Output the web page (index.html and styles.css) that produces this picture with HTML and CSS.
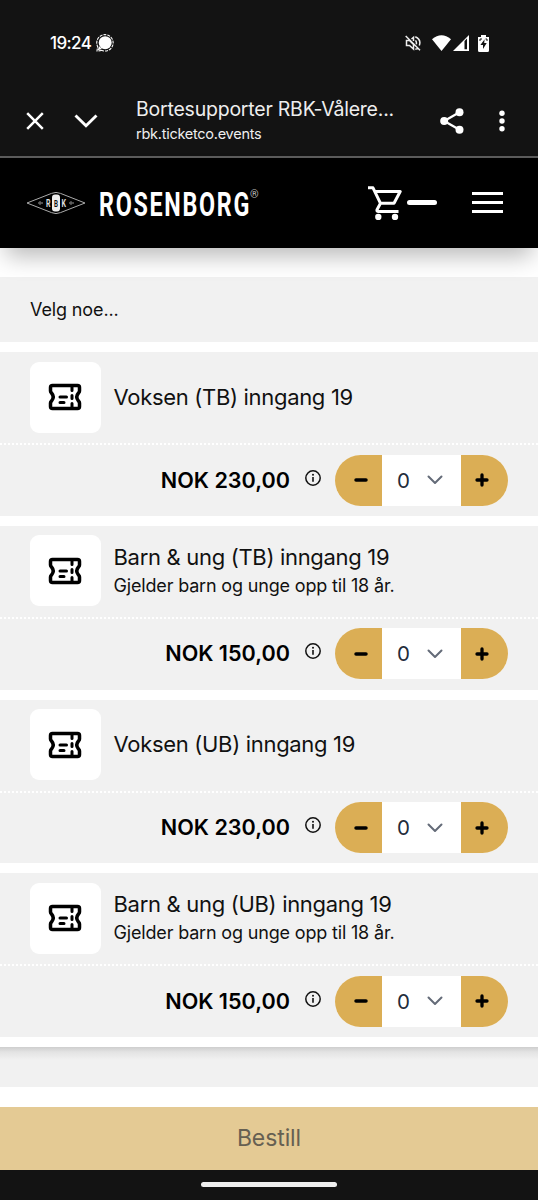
FILE: index.html
```html
<!DOCTYPE html>
<html lang="no">
<head>
<meta charset="utf-8">
<title>Bortesupporter RBK-Vålerenga</title>
<link rel="stylesheet" href="styles.css">
</head>
<body>
<svg class="defs" aria-hidden="true">
  <symbol id="ticket" viewBox="0 0 34 28">
    <path d="M4.500 2.500H29.500Q31.500 2.500 31.500 4.500V8Q31.500 9 30.500 10Q27 14 30.500 18Q31.500 19 31.500 20V23.500Q31.500 25.500 29.500 25.500H4.500Q2.500 25.500 2.500 23.500V20Q2.500 19 3.500 18Q7 14 3.500 10Q2.500 9 2.500 8V4.500Q2.500 2.500 4.500 2.500Z" fill="none" stroke="#000" stroke-width="3.500"/>
    <path d="M24 3V7.500M24 12.500V15.500M24 20.500V25M15.500 14H18.500M12 14H18M12 19.500H16" fill="none" stroke="#000" stroke-width="3" stroke-linecap="round"/>
  </symbol>
  <symbol id="info" viewBox="0 0 16 16">
    <circle cx="8" cy="8" r="7.200" fill="none" stroke="#111" stroke-width="1.500"/>
    <path d="M8 7V11.700" stroke="#111" stroke-width="1.600"/><circle cx="8" cy="4.700" r="1" fill="#111"/>
  </symbol>
  <symbol id="minus" viewBox="0 0 14 14"><path d="M2 7H12" stroke="#000" stroke-width="3.500" stroke-linecap="round"/></symbol>
  <symbol id="plus" viewBox="0 0 14 14"><path d="M2 7H12M7 2V12" stroke="#000" stroke-width="3.300" stroke-linecap="round"/></symbol>
  <symbol id="chevron" viewBox="0 0 16 10"><path d="M1.500 1.500L8 8L14.500 1.500" fill="none" stroke="#646b78" stroke-width="2" stroke-linecap="round" stroke-linejoin="round"/></symbol>
</svg>

<header class="browser">
  <div class="status">
    <span class="clock">19:24</span>
    <svg class="bubble" viewBox="0 0 18 18"><circle cx="9.200" cy="8.700" r="6.500" fill="#fff"/><path d="M3 12L1.800 16.200L6 15Z" fill="#fff"/><path d="M5.500 16.500L1 17L1.600 12.500A8.200 8.200 0 1 1 5.500 16.300" fill="none" stroke="#fff" stroke-width="1.100" stroke-dasharray="3 1"/></svg>
    <span class="grow"></span>
    <svg class="mute" viewBox="0 0 16 16"><path d="M1.500 5.500V10.500H4.500L8.500 14V9.500L4.500 5.500ZM6.500 4L8.500 2.300V6M10.500 5.300Q12 7.500 11.200 9.300M10.300 1.700Q16.500 4.500 14.300 10.500M13 13Q11.800 14 10.300 14.300M.7 1L15 15.300" fill="none" stroke="#eee" stroke-width="1.500"/></svg>
    <svg class="wifi" viewBox="0 0 19 16"><path d="M0 4.300Q9.500-4 19 4.300L9.500 16Z" fill="#fff"/></svg>
    <svg class="signal" viewBox="0 0 16 16"><path d="M16 0V16H0Z" fill="#fff"/><path d="M11.500 6V14.300H14V3.500Z" fill="#131313"/></svg>
    <svg class="battery" viewBox="0 0 11 17"><path d="M3 0H8V2H11V15.500Q11 17 9.500 17H1.500Q0 17 0 15.500V2H3Z" fill="#fff"/><path d="M6.600 4.200L2.400 10H5V14L8.700 8H6.200Z" fill="#131313"/><path d="M2 6V4H4M7.500 4H9V6" fill="none" stroke="#131313" stroke-width="1"/></svg>
  </div>
  <div class="toolbar">
    <svg class="close" viewBox="0 0 18 18"><path d="M1.200 1.200L16.800 16.800M16.800 1.200L1.200 16.800" stroke="#fff" stroke-width="2.500"/></svg>
    <svg class="down" viewBox="0 0 24 14"><path d="M1.500 1.500L12 11.700L22.500 1.500" fill="none" stroke="#fff" stroke-width="2.900"/></svg>
    <div class="page">
      <div class="page-title">Bortesupporter RBK-Vålere...</div>
      <div class="page-url">rbk.ticketco.events</div>
    </div>
    <svg class="share" viewBox="0 0 24 26"><path d="M19.500 4.200L4.200 13L19.500 21.800" fill="none" stroke="#fff" stroke-width="2.300"/><circle cx="19.500" cy="4.200" r="4" fill="#fff"/><circle cx="4.200" cy="13" r="4" fill="#fff"/><circle cx="19.500" cy="21.800" r="4" fill="#fff"/></svg>
    <svg class="more" viewBox="0 0 6 22"><circle cx="3" cy="3.200" r="2.700" fill="#fff"/><circle cx="3" cy="11" r="2.700" fill="#fff"/><circle cx="3" cy="18.800" r="2.700" fill="#fff"/></svg>
  </div>
</header>

<nav class="site">
  <svg class="crest" viewBox="0 0 60 24"><path d="M1 12L25.500 2.400Q30 .4 34.500 2.400L59 12L34.500 21.600Q30 23.600 25.500 21.600Z" fill="none" stroke="#aaa" stroke-width="1"/><rect x="26" y="3.500" width="8" height="17" rx="3" fill="#eee"/><text x="20" y="15.700" class="crest-letter" textLength="4.500" lengthAdjust="spacingAndGlyphs">R</text><text x="28" y="15.500" class="crest-letter dark" textLength="4" lengthAdjust="spacingAndGlyphs">B</text><text x="35.500" y="15.700" class="crest-letter" textLength="4.500" lengthAdjust="spacingAndGlyphs">K</text><path d="M12 12H17M14 10V14M43 12H48M45 10V14" stroke="#666" stroke-width="1.300"/></svg>
  <svg class="wordmark" viewBox="0 0 150 44"><text x="-1" y="34.500" class="brand" textLength="152" lengthAdjust="spacingAndGlyphs">ROSENBORG</text></svg>
  <span class="reg">®</span>
  <span class="grow"></span>
  <svg class="cart" viewBox="0 0 34 34"><path d="M0 1.800H5L12.500 17.300H26L32.200 5.500H7M12.500 17.300L9 23.700Q8.600 25.600 10.500 25.600H30.500" fill="none" stroke="#fff" stroke-width="3" stroke-linejoin="round"/><circle cx="10.300" cy="31" r="3.200" fill="#fff"/><circle cx="27" cy="31" r="3.200" fill="#fff"/></svg>
  <span class="cart-count"></span>
  <span class="menu"><i></i><i></i><i></i></span>
</nav>

<main>
  <div class="tickets">
    <div class="intro">Velg noe...</div>
    <section class="card">
      <div class="info-row"><span class="thumb"><svg><use href="#ticket"/></svg></span><div><div class="name single">Voksen (TB) inngang 19</div></div></div>
      <div class="buy-row"><b class="price">NOK 230,00</b><svg class="info"><use href="#info"/></svg><div class="stepper"><span class="btn"><svg><use href="#minus"/></svg></span><span class="qty">0<svg><use href="#chevron"/></svg></span><span class="btn"><svg><use href="#plus"/></svg></span></div></div>
    </section>
    <section class="card">
      <div class="info-row"><span class="thumb"><svg><use href="#ticket"/></svg></span><div><div class="name">Barn &amp; ung (TB) inngang 19</div><div class="desc">Gjelder barn og unge opp til 18 år.</div></div></div>
      <div class="buy-row"><b class="price">NOK 150,00</b><svg class="info"><use href="#info"/></svg><div class="stepper"><span class="btn"><svg><use href="#minus"/></svg></span><span class="qty">0<svg><use href="#chevron"/></svg></span><span class="btn"><svg><use href="#plus"/></svg></span></div></div>
    </section>
    <section class="card">
      <div class="info-row"><span class="thumb"><svg><use href="#ticket"/></svg></span><div><div class="name single">Voksen (UB) inngang 19</div></div></div>
      <div class="buy-row"><b class="price">NOK 230,00</b><svg class="info"><use href="#info"/></svg><div class="stepper"><span class="btn"><svg><use href="#minus"/></svg></span><span class="qty">0<svg><use href="#chevron"/></svg></span><span class="btn"><svg><use href="#plus"/></svg></span></div></div>
    </section>
    <section class="card">
      <div class="info-row"><span class="thumb"><svg><use href="#ticket"/></svg></span><div><div class="name">Barn &amp; ung (UB) inngang 19</div><div class="desc">Gjelder barn og unge opp til 18 år.</div></div></div>
      <div class="buy-row"><b class="price">NOK 150,00</b><svg class="info"><use href="#info"/></svg><div class="stepper"><span class="btn"><svg><use href="#minus"/></svg></span><span class="qty">0<svg><use href="#chevron"/></svg></span><span class="btn"><svg><use href="#plus"/></svg></span></div></div>
    </section>
  </div>
  <div class="below"></div>
</main>
<div class="order">Bestill</div>
<footer class="gesture"><span></span></footer>
</body>
</html>
```

FILE: styles.css
```css
* { box-sizing: border-box; }
body {
  margin: 0;
  width: 538px;
  height: 1200px;
  overflow: hidden;
  display: flex;
  flex-direction: column;
  background: #fff;
  color: #111;
  font-family: Inter, "Liberation Sans", sans-serif;
}
svg { display: block; flex: none; }
.defs { display: none; }
.grow { flex: 1; }

.browser { height: 158px; flex: none; background: #131313; border-bottom: 2px solid #5c5c5c; color: #fff; }
.status { height: 86px; display: flex; align-items: center; padding: 0 49px 0 50px; }
.clock { font-size: 17px; font-weight: 500; line-height: 20px; width: 46px; letter-spacing: -.6px; white-space: nowrap; }
.bubble { width: 18px; height: 18px; }
.mute { width: 16px; height: 16px; margin-right: 11px; }
.wifi { width: 19px; height: 16px; margin-right: 2px; }
.signal { width: 16px; height: 16px; margin-right: 9px; }
.battery { width: 11px; height: 17px; }
.toolbar { height: 70px; display: flex; align-items: center; padding: 0 33px 0 26px; }
.close { width: 18px; height: 18px; margin-right: 30px; }
.down { width: 24px; height: 14px; margin-right: 38px; }
.page { flex: 1; white-space: nowrap; padding-top: 1px; }
.page-title { font-size: 19.500px; line-height: 25px; color: #eee; letter-spacing: -.22px; }
.page-url { font-size: 14.500px; line-height: 24px; color: #eee; letter-spacing: -.26px; }
.share { width: 24px; height: 26px; margin-right: 35px; }
.more { width: 6px; height: 22px; }

.site { height: 90px; flex: none; background: #000; display: flex; align-items: center; padding: 0 35px 0 26px; position: relative; box-shadow: 0 14px 22px -6px rgba(0,0,0,.28); }
.crest { width: 60px; height: 24px; margin-right: 14px; }
.crest-letter { font: 700 10px Roboto, sans-serif; fill: #ddd; }
.dark { fill: #111; font-size: 9px; }
.wordmark { width: 150px; height: 44px; overflow: visible; }
.brand { font: 700 34px Roboto, sans-serif; letter-spacing: 2.500px; fill: #fff; }
.reg { font: 11px/12px Roboto, sans-serif; color: #bbb; margin-top: -16px; }
.cart { width: 34px; height: 34px; margin-right: 5px; margin-top: -1px; }
.cart-count { width: 30px; height: 5px; border-radius: 3px; background: #fff; margin: -1px 35px 0 0; }
.menu { display: flex; flex-direction: column; gap: 6px; width: 31px; margin-top: -1px; }
.menu i { height: 3px; background: #fff; }

main { flex: none; padding-top: 29px; }
.tickets { display: flex; flex-direction: column; gap: 10px; padding-bottom: 10px; }
.intro { height: 65.200px; background: #f1f1f1; padding: 0 30px; font-size: 18px; line-height: 65px; letter-spacing: -.12px; }
.card { height: 163.700px; background: #f1f1f1; }
.info-row { height: 93px; padding: 10.500px 30px 11.500px; display: flex; align-items: center; gap: 12.500px; border-bottom: 2px dotted #fff; }
.thumb { width: 71px; height: 71px; border-radius: 9px; background: #fff; display: flex; align-items: center; justify-content: center; padding-right: 1px; }
.thumb svg { width: 34px; height: 28px; }
.name { font-size: 22px; line-height: 30px; white-space: nowrap; letter-spacing: -.31px; }
.single { padding-bottom: 1px; }
.desc { font-size: 18px; line-height: 28px; white-space: nowrap; letter-spacing: -.17px; }
.buy-row { display: flex; height: 70px; align-items: center; justify-content: flex-end; padding-right: 30px; }
.price { font-size: 21.600px; font-weight: 600; color: #000; white-space: nowrap; margin-top: -1px; }
.info { width: 16px; height: 16px; margin: -5px 14px 0 15px; }
.stepper { width: 173px; height: 51px; display: flex; border-radius: 26px; overflow: hidden; background: #fff; }
.btn { width: 47px; background: #dbae55; display: flex; align-items: center; justify-content: center; }
.btn svg { width: 14px; height: 14px; }
.btn:first-child { padding-left: 4px; }
.btn:last-child { padding-right: 6px; }
.qty { flex: 1; display: flex; align-items: center; justify-content: space-between; padding: 0 18px 0 15px; font-size: 20.500px; color: #222b3a; }
.qty svg { width: 16px; height: 10px; }
.below { height: 40px; background: linear-gradient(#cecece, #e3e3e3 5px, #f1f1f1 13px); }
.order { height: 63px; flex: none; margin-top: auto; padding-bottom: 1px; background: #e4ca94; color: #666052; display: flex; align-items: center; justify-content: center; font-size: 23px; letter-spacing: -.1px; }
.gesture { height: 30px; flex: none; background: #131313; display: flex; justify-content: center; padding-top: 12px; }
.gesture span { width: 136px; height: 5px; border-radius: 3px; background: #eee; }
```
